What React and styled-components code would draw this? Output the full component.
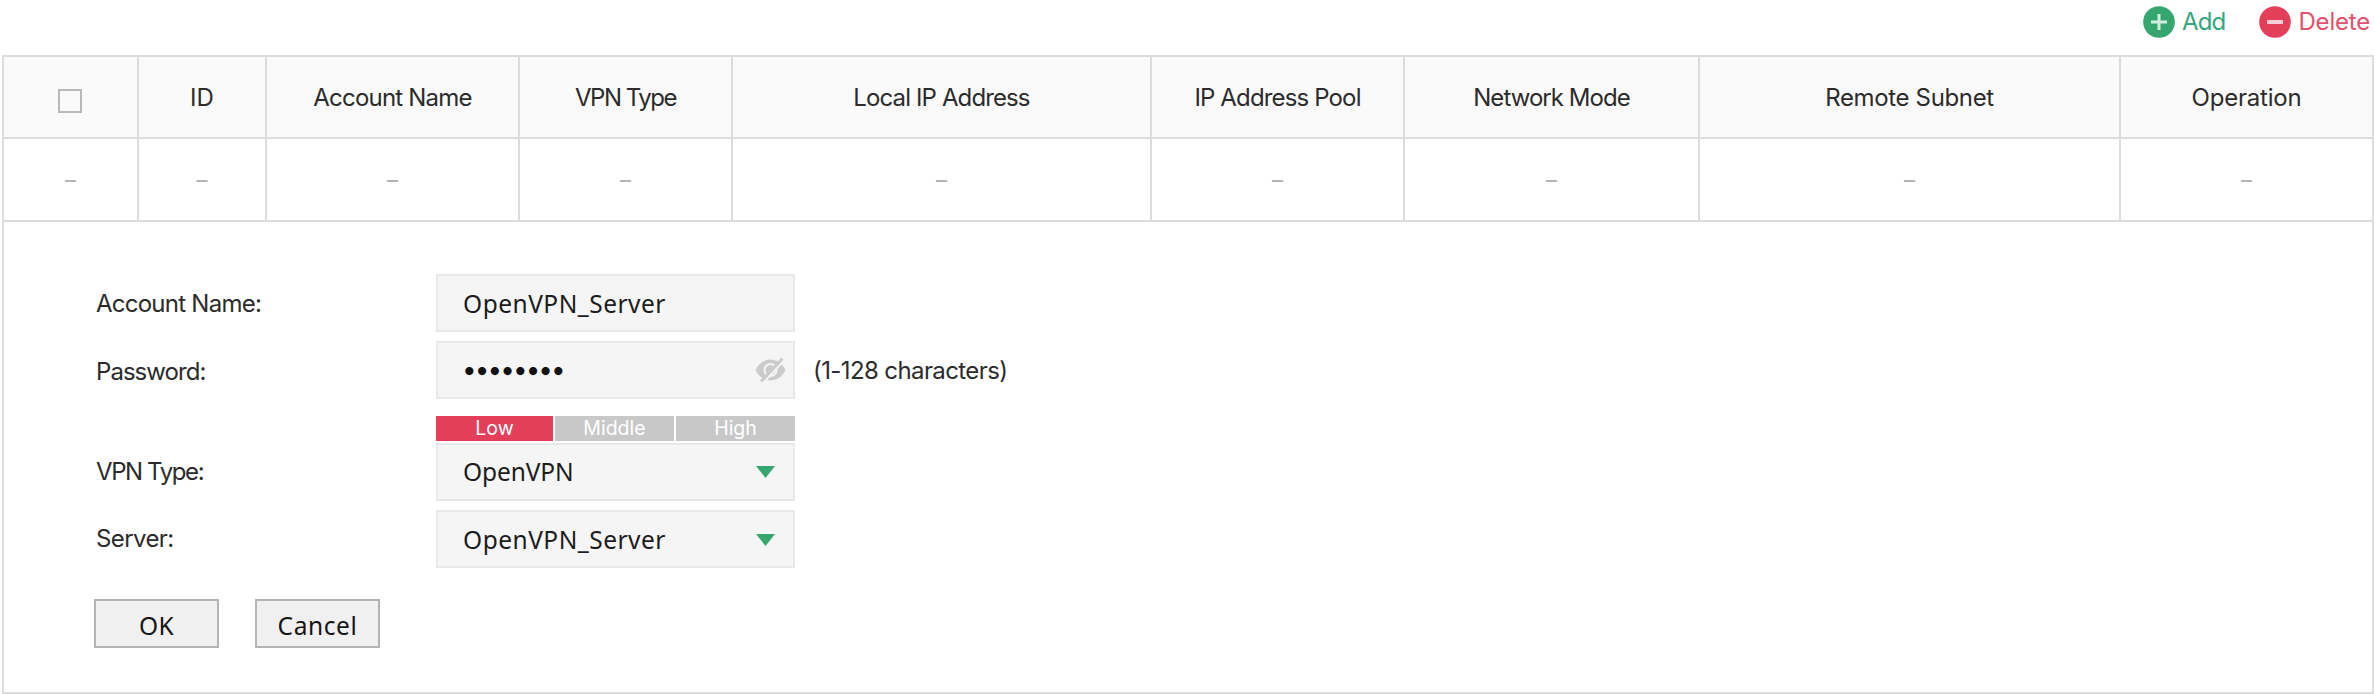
import React, { useState } from "react";
import styled, { createGlobalStyle } from "styled-components";


const GlobalStyle = createGlobalStyle`
    *{
        box-sizing: border-box;
    }

    body{
        margin: 0;
        background: #fff;
        overflow: hidden;
    }
`

const Page = styled.main`
    display: flex;
    flex-direction: column;
    width: 2375px;
    height: 694px;
    padding: 0 1px 0 2px;

    color: #2b2b2b;
    font-family: Inter, "Liberation Sans", sans-serif;
    font-size: 24px;
    line-height: 30px;
`

const Text = styled.span`
    white-space: nowrap;
    letter-spacing: ${props => props.$spacing || 0}px;
`

const Toolbar = styled.div`
    display: flex;
    justify-content: flex-end;
    gap: 34px;
    height: 55px;
    padding: 6px 4px 0 0;
`

const ToolButton = styled.button`
    display: flex;
    align-items: center;
    gap: 7px;
    height: 32px;
    padding: 0;
    border: 0;
    background: none;
    color: ${props => props.$color};
    font: inherit;

    svg{
        flex: none;
    }
`

const Panel = styled.section`
    flex: 1;
    border: 2px solid #dcdcdc;
`

const TableRow = styled.div`
    display: grid;
    grid-template-columns: 135px 128px 253px 213px 419px 253px 295px 421px 1fr;
    height: 83px;
    border-bottom: 2px solid #dcdcdc;
    background: #fff;
    color: #b4b4b4;
    font-family: "Noto Sans", sans-serif;
    font-size: 26px;
`

const HeadRow = styled(TableRow)`
    height: 82px;
    background: #fafafa;
    color: #2b2b2b;
    font-family: inherit;
    font-size: inherit;
`

const Cell = styled.div`
    display: flex;
    align-items: center;
    justify-content: center;
    padding-bottom: 3px;

    &:not(:last-child){
        border-right: 2px solid #dcdcdc;
    }
`

const HeadCell = styled(Cell)`
    padding: 1px 0 0;
`

const Checkbox = styled.input`
    appearance: none;
    width: 24px;
    height: 24px;
    margin: 6px 1px 0 0;
    border: 2px solid #b9b9b9;
    background: #fafafa;
`

const Form = styled.form`
    padding: 52px 0 0 92px;
`

const FormRow = styled.div`
    display: flex;
    align-items: center;
    height: 58px;
    margin-bottom: ${props => props.$gap}px;
`

const Label = styled.label`
    width: 340px;
    padding-top: ${props => props.$drop || 0}px;
`

const Field = styled.div`
    display: flex;
    align-items: center;
    justify-content: space-between;
    width: 359px;
    height: 58px;
    padding: ${props => props.$drop || 0}px ${props => props.$end || 0}px 0 25px;
    border: 2px solid #e8e8e8;
    background: #f5f5f5;
    color: #1c1c1c;
    font-family: "Noto Sans", "Open Sans", sans-serif;
    font-size: 24.5px;
`

const Dots = styled(Text)`
    margin-left: -1px;
    color: #111;
    font-family: Inter, sans-serif;
    font-size: 26px;
`

const Hint = styled.div`
    margin-left: 18px;
    padding-top: 1px;
`

const Strength = styled.div`
    display: grid;
    grid-template-columns: 117px 119px 119px;
    column-gap: 2px;
    width: 359px;
    height: 25px;
    margin: 0 0 2px 340px;
`

const Level = styled.div`
    background: ${props => props.$active ? '#e43f5a' : '#c8c8c8'};
    color: #fff;
    font-size: 19.5px;
    line-height: 24px;
    text-align: center;
`

const Actions = styled.div`
    display: flex;
    gap: 36px;
    margin-left: -2px;
`

const ActionButton = styled.button`
    width: 125px;
    height: 49px;
    padding: 4px 0 0;
    border: 2px solid #b4b4b4;
    background: #f0f0f0;
    color: #151515;
    font-family: "Noto Sans", "Open Sans", sans-serif;
    font-size: 24.5px;
    line-height: 30px;
`


const AddIcon = () => (
    <svg width="32" height="32" viewBox="0 0 32 32">
        <circle cx="16" cy="16" r="15.8" fill="#35a66d" />
        <path d="M8 16h16M16 8v16" stroke="#d2eddf" strokeWidth="3" />
    </svg>
)

const DeleteIcon = () => (
    <svg width="32" height="32" viewBox="0 0 32 32">
        <circle cx="16" cy="16" r="15.8" fill="#e43f5a" />
        <path d="M8 16h16" stroke="#f9cdd5" strokeWidth="4" />
    </svg>
)

const EyeOffIcon = () => (
    <svg width="31" height="24" viewBox="0 0 31 24">
        <path d="M0.5 12C4 5 9.5 1.5 15.5 1.5S27 5 30.5 12C27 19 21.5 22.5 15.5 22.5S4 19 0.5 12Z" fill="#cbcbcb" />
        <circle cx="15.5" cy="12" r="6" fill="none" stroke="#f5f5f5" strokeWidth="2" />
        <path d="M29.5 2L8 25" stroke="#f5f5f5" strokeWidth="2" />
        <path d="M27.5 0.5L6 23.5" stroke="#cbcbcb" strokeWidth="3" />
    </svg>
)

const Arrow = () => (
    <svg width="19" height="12" viewBox="0 0 19 12">
        <path d="M0 0h19L9.5 12Z" fill="#35a66d" />
    </svg>
)


const columns = [
    { title: 'ID' },
    { title: 'Account Name', spacing: -0.8 },
    { title: 'VPN Type', spacing: -1.5 },
    { title: 'Local IP Address', spacing: -0.88 },
    { title: 'IP Address Pool', spacing: -0.85 },
    { title: 'Network Mode', spacing: -0.95 },
    { title: 'Remote Subnet', spacing: -0.35 },
    { title: 'Operation', spacing: -0.2 },
]

const levels = ['Low', 'Middle', 'High']

const AccountTable = () => {
    const [checked, setChecked] = useState(false)

    return (
        <>
            <HeadRow>
                <HeadCell>
                    <Checkbox type="checkbox" checked={checked} onChange={() => setChecked(!checked)} />
                </HeadCell>
                {columns.map(x => <HeadCell key={x.title}><Text $spacing={x.spacing}>{x.title}</Text></HeadCell>)}
            </HeadRow>
            <TableRow>
                <Cell>–</Cell>
                {columns.map(x => <Cell key={x.title}>–</Cell>)}
            </TableRow>
        </>
    )
}

const AccountForm = () => {
    return (
        <Form onSubmit={evt => evt.preventDefault()}>
            <FormRow $gap={9}>
                <Label $drop={1}><Text $spacing={-0.75}>Account Name:</Text></Label>
                <Field $drop={2}><Text $spacing={0.5}>OpenVPN_Server</Text></Field>
            </FormRow>
            <FormRow $gap={17}>
                <Label $drop={3}><Text $spacing={-0.95}>Password:</Text></Label>
                <Field $end={7}>
                    <Dots $spacing={-1.9}>••••••••</Dots>
                    <EyeOffIcon />
                </Field>
                <Hint><Text $spacing={-0.6}>(1-128 characters)</Text></Hint>
            </FormRow>
            <Strength>
                {levels.map((x, i) => <Level key={x} $active={i === 0}>{x}</Level>)}
            </Strength>
            <FormRow $gap={9}>
                <Label><Text $spacing={-1.4}>VPN Type:</Text></Label>
                <Field $end={18}>
                    <Text $spacing={-0.1}>OpenVPN</Text>
                    <Arrow />
                </Field>
            </FormRow>
            <FormRow $gap={31}>
                <Label><Text $spacing={-0.6}>Server:</Text></Label>
                <Field $end={18} $drop={1}>
                    <Text $spacing={0.5}>OpenVPN_Server</Text>
                    <Arrow />
                </Field>
            </FormRow>
            <Actions>
                <ActionButton><Text $spacing={0.3}>OK</Text></ActionButton>
                <ActionButton><Text $spacing={0.6}>Cancel</Text></ActionButton>
            </Actions>
        </Form>
    )
}

const App = () => {
    return (
        <Page>
            <GlobalStyle />
            <Toolbar>
                <ToolButton $color="#35a67c"><AddIcon /><Text $spacing={-0.8}>Add</Text></ToolButton>
                <ToolButton $color="#e4506a"><DeleteIcon /><Text $spacing={-0.2}>Delete</Text></ToolButton>
            </Toolbar>
            <Panel>
                <AccountTable />
                <AccountForm />
            </Panel>
        </Page>
    )
}

export default App;
